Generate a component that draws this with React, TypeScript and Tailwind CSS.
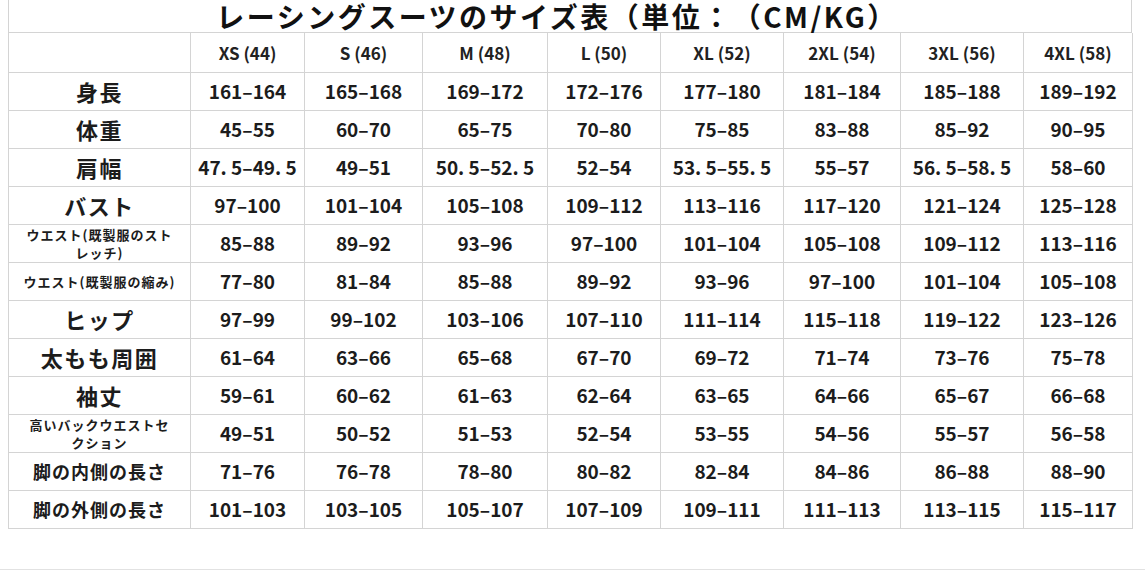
import React from 'react';

const cols = ['XS (44)', 'S (46)', 'M (48)', 'L (50)', 'XL (52)', '2XL (54)', '3XL (56)', '4XL (58)'];

type Row = { label: React.ReactNode; size?: 'small' | 'mid'; values: string[] };

const rows: Row[] = [
  { label: '身長', values: ['161–164', '165–168', '169–172', '172–176', '177–180', '181–184', '185–188', '189–192'] },
  { label: '体重', values: ['45–55', '60–70', '65–75', '70–80', '75–85', '83–88', '85–92', '90–95'] },
  { label: '肩幅', values: ['47. 5–49. 5', '49–51', '50. 5–52. 5', '52–54', '53. 5–55. 5', '55–57', '56. 5–58. 5', '58–60'] },
  { label: 'バスト', values: ['97–100', '101–104', '105–108', '109–112', '113–116', '117–120', '121–124', '125–128'] },
  {
    label: (
      <>
        ウエスト(既製服のスト
        <br />
        レッチ)
      </>
    ),
    size: 'small',
    values: ['85–88', '89–92', '93–96', '97–100', '101–104', '105–108', '109–112', '113–116'],
  },
  { label: 'ウエスト(既製服の縮み)', size: 'small', values: ['77–80', '81–84', '85–88', '89–92', '93–96', '97–100', '101–104', '105–108'] },
  { label: 'ヒップ', values: ['97–99', '99–102', '103–106', '107–110', '111–114', '115–118', '119–122', '123–126'] },
  { label: '太もも周囲', values: ['61–64', '63–66', '65–68', '67–70', '69–72', '71–74', '73–76', '75–78'] },
  { label: '袖丈', values: ['59–61', '60–62', '61–63', '62–64', '63–65', '64–66', '65–67', '66–68'] },
  {
    label: (
      <>
        高いバックウエストセ
        <br />
        クション
      </>
    ),
    size: 'small',
    values: ['49–51', '50–52', '51–53', '52–54', '53–55', '54–56', '55–57', '56–58'],
  },
  { label: '脚の内側の長さ', size: 'mid', values: ['71–76', '76–78', '78–80', '80–82', '82–84', '84–86', '86–88', '88–90'] },
  { label: '脚の外側の長さ', size: 'mid', values: ['101–103', '103–105', '105–107', '107–109', '109–111', '111–113', '113–115', '115–117'] },
];

const grid = 'grid grid-cols-[182px_114px_118px_125px_113px_123px_117px_123px_109px]';
const cell = 'flex items-center justify-center border-r border-b border-[#d4d4d4] text-center';

const labelSize = {
  small: 'text-[13px] leading-[18px] tracking-[1px]',
  mid: 'text-[18px] tracking-[1px]',
  big: 'text-[22px] tracking-[1.5px]',
};

export default function App() {
  return (
    <div
      className="w-[1145px] h-[571px] bg-white overflow-hidden text-[#1c1c1c]"
      style={{ fontFamily: '"Noto Sans CJK JP", "Noto Sans", sans-serif' }}
    >
      <div className="ml-[8px] w-[1124px] border-l border-[#d4d4d4]">
        <div className="h-[33px] border-r border-b border-[#d4d4d4] flex items-center justify-center pr-[26px]">
          <h1 className="text-[28px] font-bold leading-[30px] tracking-[2.5px] text-[#111] [text-spacing-trim:space-all] whitespace-nowrap">
            レーシングスーツのサイズ表（単位：（CM/KG）
          </h1>
        </div>

        <div className={`${grid} h-[40px]`}>
          <div className={cell} />
          {cols.map((c) => (
            <div key={c} className={`${cell} text-[17px] font-semibold text-[#222]`}>
              {c}
            </div>
          ))}
        </div>

        {rows.map((r, i) => (
          <div key={i} className={`${grid} h-[38px]`}>
            <div className={`${cell} font-bold ${labelSize[r.size ?? 'big']}`}>
              <span>{r.label}</span>
            </div>
            {r.values.map((v, j) => (
              <div key={j} className={`${cell} text-[19px] font-bold`}>
                {v}
              </div>
            ))}
          </div>
        ))}
      </div>

      <div className="mt-[40px] h-px bg-[#e2e2e2]" />
    </div>
  );
}
